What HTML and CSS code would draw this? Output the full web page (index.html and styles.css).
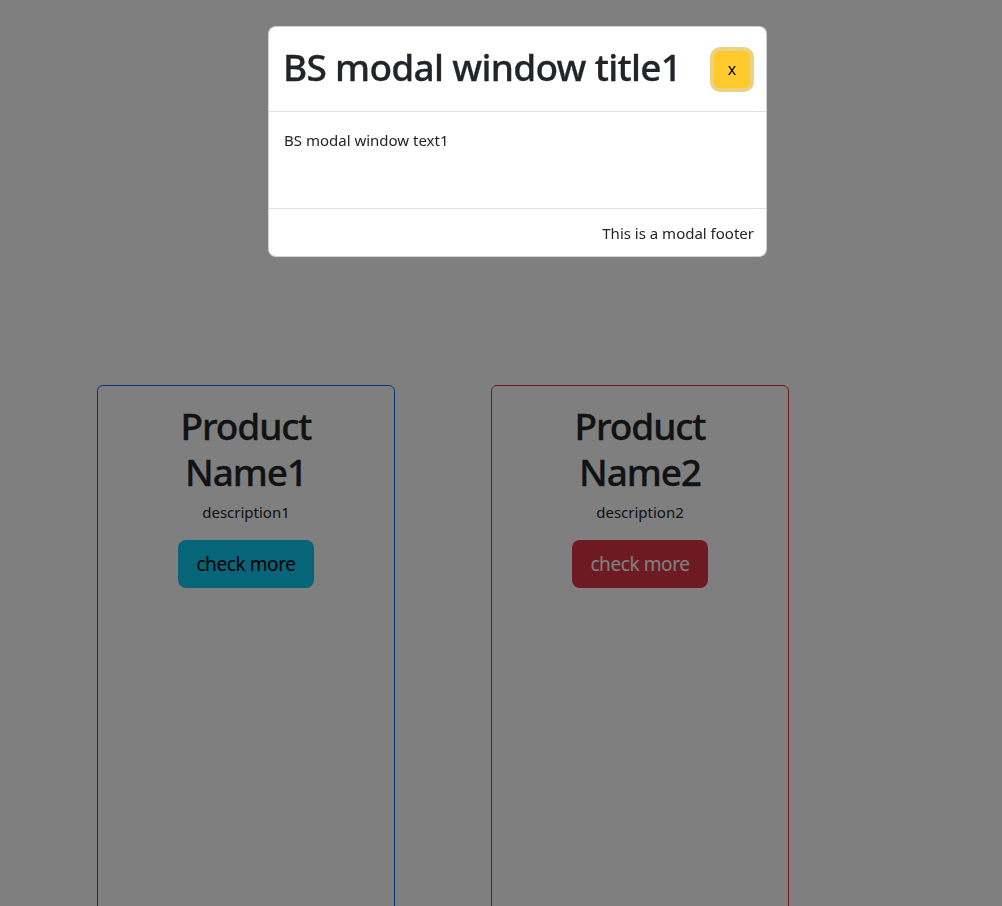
FILE: index.html
```html
<!DOCTYPE html>
<html lang="en">
<head>
<meta charset="utf-8">
<title>BS modal</title>
<link rel="stylesheet" href="styles.css">
</head>
<body>
<main class="page">
  <section class="products">
    <article class="card card-primary">
      <h2 class="card-title">Product Name1</h2>
      <p class="card-text">description1</p>
      <button class="btn btn-info">check more</button>
    </article>
    <article class="card card-danger">
      <h2 class="card-title">Product Name2</h2>
      <p class="card-text">description2</p>
      <button class="btn btn-danger">check more</button>
    </article>
  </section>
</main>
<div class="backdrop"></div>
<div class="modal">
  <div class="modal-content">
    <div class="modal-header">
      <h1 class="modal-title">BS modal window title1</h1>
      <button class="btn-close">x</button>
    </div>
    <div class="modal-body">
      <p>BS modal window text1</p>
    </div>
    <div class="modal-footer">This is a modal footer</div>
  </div>
</div>
</body>
</html>
```
FILE: styles.css
```css
* { box-sizing: border-box; }
html, body { margin: 0; padding: 0; height: 100%; overflow: hidden; }
body {
  font-family: "Noto Sans", "Open Sans", sans-serif;
  color: #212529;
  background: #fff;
}
.page { padding-top: 385px; }
.products {
  display: flex;
  gap: 96px;
  padding-left: 97px;
}
.card {
  width: 298px;
  height: 700px;
  border: 1px solid;
  border-radius: 6px;
  display: flex;
  flex-direction: column;
  align-items: center;
  padding-top: 17px;
  text-align: center;
}
.card-primary { border-color: #0d6efd; }
.card-danger { border-color: #dc3545; }
.card-title {
  margin: 0;
  font-size: 37px;
  line-height: 46px;
  font-weight: 500;
  letter-spacing: -1.1px;
  width: 160px;
  -webkit-text-stroke: 0.3px currentColor;
}
.card-text {
  margin: 5px 0 16px;
  font-size: 15px;
  line-height: 24px;
}
.btn {
  font-family: inherit;
  font-size: 19px;
  line-height: 30px;
  padding: 0;
  border: 1px solid transparent;
  border-radius: 8px;
  width: 136px;
  height: 48px;
  white-space: nowrap;
  letter-spacing: -0.4px;
}
.btn-info { background: #0dcaf0; color: #000; }
.btn-danger { background: #dc3545; color: #fff; }

.backdrop {
  position: fixed;
  inset: 0;
  background: rgba(0, 0, 0, 0.5);
}
.modal {
  position: fixed;
  top: 26px;
  left: 268px;
  width: 499px;
}
.modal-content {
  background: #fff;
  border: 1px solid rgba(0, 0, 0, 0.175);
  border-radius: 8px;
  overflow: hidden;
}
.modal-header {
  height: 85px;
  display: flex;
  align-items: center;
  justify-content: space-between;
  padding: 0 16px 0 14px;
  border-bottom: 1px solid #dee2e6;
}
.modal-title {
  margin: 0 0 4px;
  font-size: 37px;
  font-weight: 500;
  letter-spacing: -0.7px;
  line-height: 48px;
  -webkit-text-stroke: 0.3px currentColor;
}
.btn-close {
  width: 36px;
  height: 37px;
  margin-right: 0;
  background: #ffca2c;
  border: 1px solid #ffc720;
  border-radius: 6px;
  box-shadow: 0 0 0 4px rgba(217, 164, 6, 0.5);
  font-family: inherit;
  font-size: 16px;
  color: #000;
  padding: 0;
}
.modal-body {
  height: 97px;
  padding: 16px 16px 16px 15px;
  border-bottom: 1px solid #dee2e6;
}
.modal-body p {
  margin: 0;
  font-size: 15px;
  line-height: 24px;
}
.modal-footer {
  padding: 13px 12px 11px;
  text-align: right;
  font-size: 15px;
  line-height: 23px;
}
```
